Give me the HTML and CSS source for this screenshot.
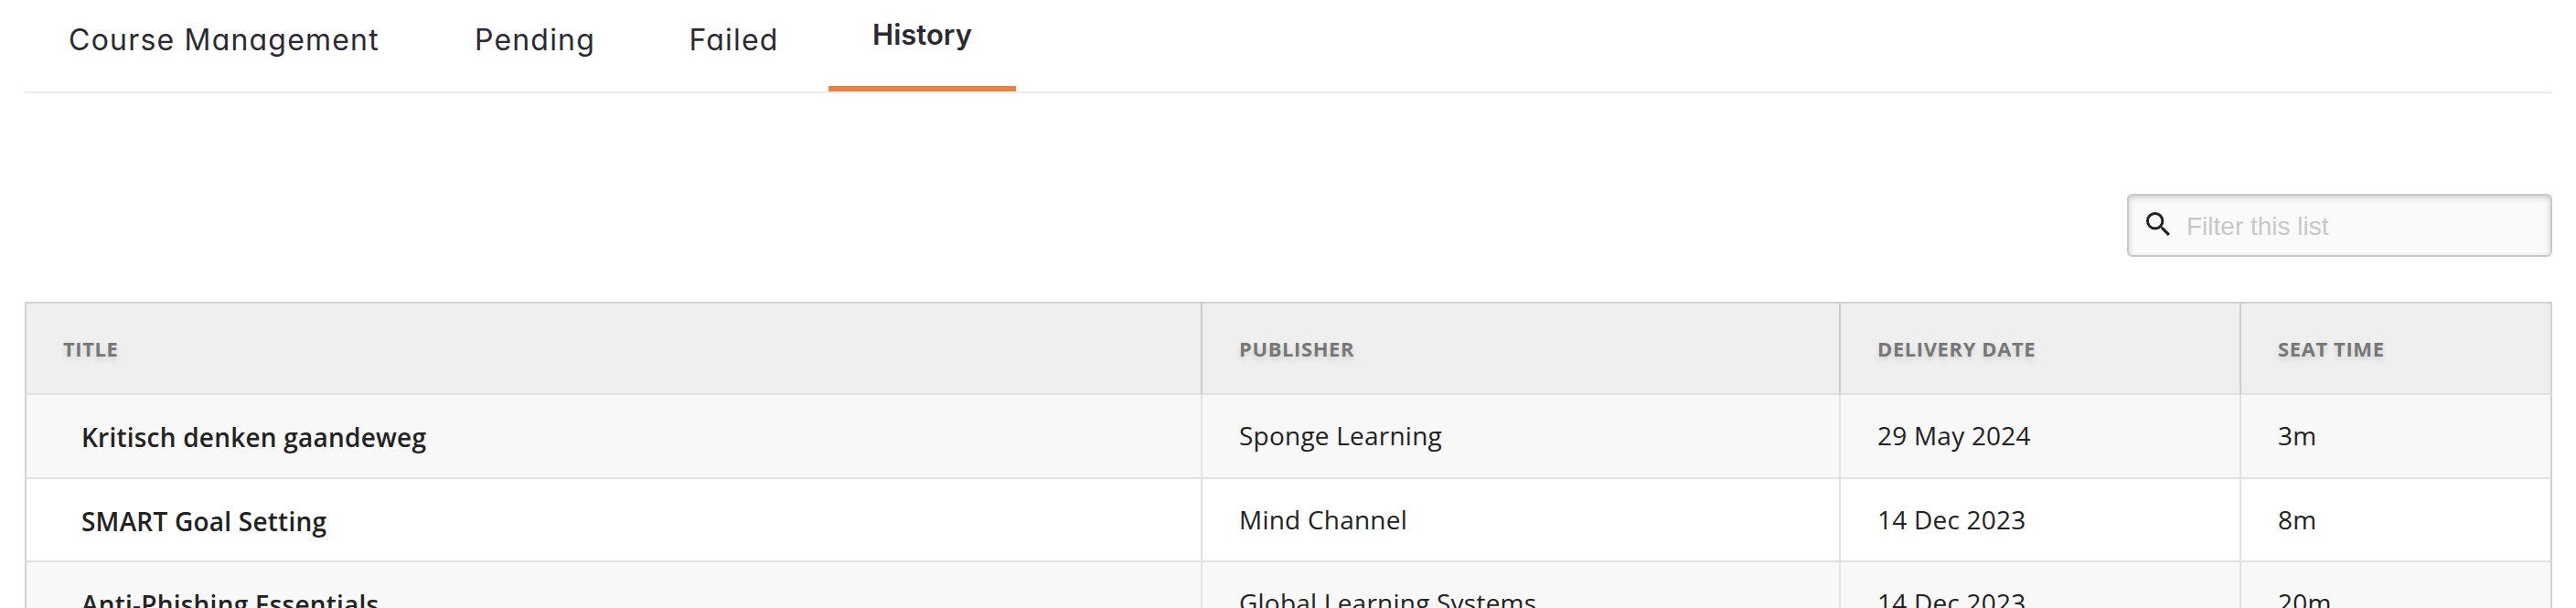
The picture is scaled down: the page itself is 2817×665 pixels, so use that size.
FILE: index.html
```html
<!DOCTYPE html>
<html lang="en">
<head>
    <meta charset="UTF-8">
    <meta name="viewport" content="width=device-width, initial-scale=1.0">
    <title>Course Management - History</title>
    <link rel="stylesheet" href="styles.css">
</head>
<body>
    <nav class="tabs">
        <a href="#" class="tab">Course Management</a>
        <a href="#" class="tab">Pending</a>
        <a href="#" class="tab">Failed</a>
        <a href="#" class="tab active">History</a>
    </nav>

    <div class="toolbar">
        <label class="filter">
            <svg class="filter-icon" viewBox="3 3 17.5 17.5" aria-hidden="true">
                <path d="M15.5 14h-.79l-.28-.27A6.471 6.471 0 0 0 16 9.5 6.5 6.5 0 1 0 9.5 16c1.61 0 3.09-.59 4.23-1.57l.27.28v.79l5 4.99L20.49 19l-4.99-5zm-6 0C7.01 14 5 11.99 5 9.5S7.01 5 9.5 5 14 7.01 14 9.5 11.99 14 9.5 14z"/>
            </svg>
            <input type="text" class="filter-input" placeholder="Filter this list">
        </label>
    </div>

    <table class="history">
        <thead>
            <tr>
                <th class="col-title">Title</th>
                <th class="col-publisher">Publisher</th>
                <th class="col-date">Delivery Date</th>
                <th class="col-time">Seat Time</th>
            </tr>
        </thead>
        <tbody>
            <tr>
                <td class="title">Kritisch denken gaandeweg</td>
                <td>Sponge Learning</td>
                <td>29 May 2024</td>
                <td>3m</td>
            </tr>
            <tr>
                <td class="title">SMART Goal Setting</td>
                <td>Mind Channel</td>
                <td>14 Dec 2023</td>
                <td>8m</td>
            </tr>
            <tr>
                <td class="title">Anti-Phishing Essentials</td>
                <td>Global Learning Systems</td>
                <td>14 Dec 2023</td>
                <td>20m</td>
            </tr>
        </tbody>
    </table>
</body>
</html>
```

FILE: styles.css
```css
* {
    box-sizing: border-box;
}

body {
    font-family: "Open Sans", "Noto Sans", sans-serif;
    margin: 0;
    padding: 0 26px 0 27px;
    height: 665px;
    overflow: hidden;
    background-color: #fff;
    color: #222;
}

/* Tabs */
.tabs {
    display: grid;
    grid-template-columns: 434px 226px 189px 205px;
    column-gap: 10px;
    height: 102px;
    border-bottom: 2px solid #ebebeb;
}

.tab {
    padding: 24px 0 0 2px;
    font-family: Inter, sans-serif;
    font-feature-settings: "cv11";
    font-size: 32px;
    line-height: 40px;
    letter-spacing: 1.2px;
    text-align: center;
    text-decoration: none;
    white-space: nowrap;
    color: #2b2933;
}

.tab.active {
    padding: 18px 0 0;
    font-size: 31px;
    font-weight: 600;
    letter-spacing: 0;
    border-bottom: 6px solid #e08543;
}

/* Filter box */
.toolbar {
    display: flex;
    justify-content: flex-end;
    padding: 110px 0 49px;
}

.filter {
    display: flex;
    align-items: center;
    width: 465px;
    height: 69px;
    padding: 0 18px 0 19px;
    border: 2px solid #c8c8c8;
    border-radius: 6px;
    background-color: #fafafa;
    box-shadow: inset 0 2px 6px rgba(0, 0, 0, 0.2);
}

.filter-icon {
    width: 26px;
    height: 26px;
    margin-bottom: 3px;
    fill: #222;
}

.filter-input {
    flex: 1;
    min-width: 0;
    margin-left: 18px;
    padding: 2px 0 0;
    border: none;
    outline: none;
    background: none;
    font-family: "Liberation Sans", Arial, sans-serif;
    font-size: 28px;
}

.filter-input::placeholder {
    color: #c8c8c8;
}

/* History table */
.history {
    width: 2764px;
    table-layout: fixed;
    border-collapse: separate;
    border-spacing: 0;
}

.col-title {
    width: 1286px;
}

.col-publisher {
    width: 698px;
}

.col-date {
    width: 438px;
}

.col-time {
    width: 342px;
}

th, td {
    padding: 0 40px;
    text-align: left;
    white-space: nowrap;
    border-left: 2px solid #e1e1e1;
    border-bottom: 2px solid #e1e1e1;
}

th {
    height: 102px;
    background-color: #efefef;
    border-left-color: #cbcbcb;
    border-top: 2px solid #d1d1d1;
    font-size: 22px;
    font-weight: 700;
    letter-spacing: 0.6px;
    text-transform: uppercase;
    color: #777;
    text-shadow: 0 4px 6px rgba(0, 0, 0, 0.12);
}

td {
    height: 92px;
    padding-bottom: 2px;
    font-size: 28px;
    letter-spacing: 0.22px;
}

th:first-child, td:first-child {
    border-left-color: #d1d1d1;
}

th:last-child, td:last-child {
    border-right: 2px solid #d1d1d1;
}

tbody tr:nth-child(odd) {
    background-color: #f8f8f8;
}

tbody tr:nth-child(2) td {
    height: 91px;
}

td.title {
    padding: 2px 40px 0 60px;
    font-weight: 600;
}
```
